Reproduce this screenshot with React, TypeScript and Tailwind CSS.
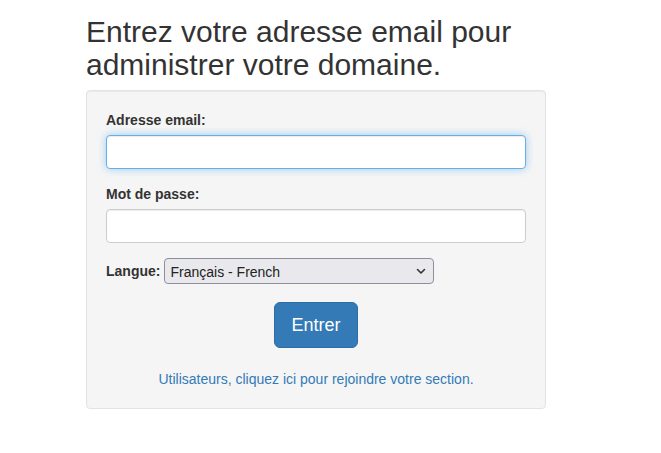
import React from 'react'

const font = { fontFamily: '"Liberation Sans", Arial, Helvetica, sans-serif' }

export default function App() {
  return (
    <div className="min-h-[453px] bg-white text-[#333] text-[14px] leading-[20px]" style={font}>
      <div className="ml-[86px] w-[460px] pt-[15px]">
        <h2 className="text-[30px] leading-[33px] font-normal text-[#333] mb-[9px]">
          Entrez votre adresse email pour administrer votre domaine.
        </h2>

        <div className="rounded-[4px] border border-[#e3e3e3] bg-[#f5f5f5] p-[19px] shadow-[inset_0_1px_1px_rgba(0,0,0,0.05)]">
          <form onSubmit={(e) => e.preventDefault()}>
            <div className="mb-[15px]">
              <label className="block font-bold mb-[5px]">Adresse email:</label>
              <input
                type="email"
                className="block w-full h-[34px] px-3 rounded-[4px] border border-[#66afe9] bg-white outline-none shadow-[inset_0_1px_1px_rgba(0,0,0,0.075),0_0_8px_rgba(102,175,233,0.6)]"
              />
            </div>

            <div className="mb-[15px]">
              <label className="block font-bold mb-[5px]">Mot de passe:</label>
              <input
                type="password"
                className="block w-full h-[34px] px-3 rounded-[4px] border border-[#ccc] bg-white outline-none shadow-[inset_0_1px_1px_rgba(0,0,0,0.075)]"
              />
            </div>

            <div className="flex items-center gap-[4px] h-[26px]">
              <label className="font-bold">Langue:</label>
              <div className="relative w-[270px] h-[26px]">
                <select
                  defaultValue="fr"
                  className="appearance-none w-full h-full rounded-[4px] border border-[#8f8f9d] bg-[#e9e9ed] pl-[5px] pr-6 pt-[1px] text-[14px] text-[#222] outline-none"
                  style={font}
                >
                  <option value="fr">Français - French</option>
                  <option value="en">English - Anglais</option>
                </select>
                <svg
                  className="pointer-events-none absolute right-[8px] top-[10px]"
                  width="10"
                  height="7"
                  viewBox="0 0 10 7"
                  fill="none"
                >
                  <path d="M1.5 1.5 5 5 8.5 1.5" stroke="#333" strokeWidth="1.6" strokeLinecap="round" strokeLinejoin="round" />
                </svg>
              </div>
            </div>

            <div className="flex justify-center mt-[18px]">
              <button
                type="submit"
                className="h-[46px] px-[16px] rounded-[6px] border border-[#2e6da4] bg-[#337ab7] text-white text-[18px] leading-[24px]"
              >
                Entrer
              </button>
            </div>

            <p className="mt-[21px] text-center">
              <a href="#" className="text-[#337ab7]">
                Utilisateurs, cliquez ici pour rejoindre votre section.
              </a>
            </p>
          </form>
        </div>
      </div>
    </div>
  )
}
